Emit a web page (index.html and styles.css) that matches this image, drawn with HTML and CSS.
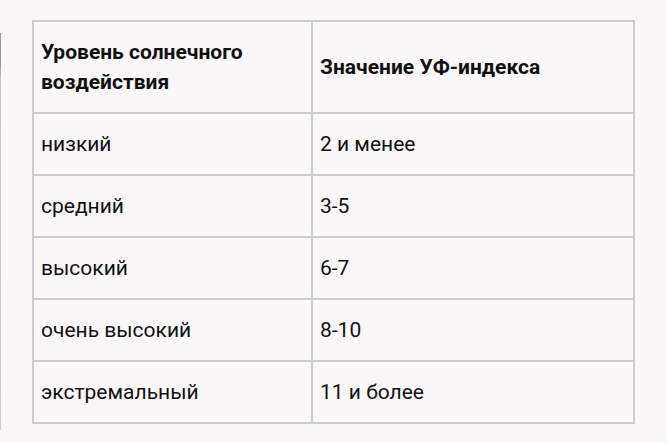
FILE: index.html
```html
<!DOCTYPE html>
<html lang="ru">
<head>
<meta charset="utf-8">
<link rel="stylesheet" href="styles.css">
</head>
<body>
<div class="page">
  <div class="edge"></div>
  <div class="content">
    <p class="cut">Индекс ультрафиолетового излучения делится на уровни согласно следующей шкале примерно так</p>
    <table class="uv">
      <thead>
        <tr><th>Уровень солнечного<br>воздействия</th><th>Значение УФ-индекса</th></tr>
      </thead>
      <tbody>
        <tr><td>низкий</td><td>2 и менее</td></tr>
        <tr><td>средний</td><td>3-5</td></tr>
        <tr><td>высокий</td><td>6-7</td></tr>
        <tr><td>очень высокий</td><td>8-10</td></tr>
        <tr><td>экстремальный</td><td>11 и более</td></tr>
      </tbody>
    </table>
  </div>
</div>
</body>
</html>
```
FILE: styles.css
```css
html, body {
  margin: 0;
  padding: 0;
  background: #f9f7f8;
  height: 100%;
  overflow: hidden;
}
body {
  font-family: Roboto, "Liberation Sans", sans-serif;
  color: #111;
}
.page {
  display: flex;
  height: 443px;
}
.edge {
  width: 1px;
  margin-top: 33px;
  height: 397px;
  background: linear-gradient(#9a9a9a 0, #9a9a9a 8%, #c4c4c4 12%, #cfcfcf 100%);
  flex: none;
}
.content {
  flex: 1;
  padding-left: 31px;
  min-width: 0;
}
.cut {
  margin: -24px 0 0 0;
  height: 44px;
  line-height: 26px;
  font-size: 20px;
  white-space: nowrap;
  overflow: hidden;
  color: #111;
}
.uv {
  border-collapse: collapse;
  width: 603px;
  font-size: 21px;
  line-height: 30px;
}
.uv th, .uv td {
  border: 2px solid #cccccc;
  text-align: left;
  vertical-align: middle;
  padding: 15px 7px 15px 7px;
}
.uv th {
  font-weight: 700;
  height: 57px;
}
.uv th:first-child, .uv td:first-child {
  width: 263px;
}
.uv td {
  height: 28.6px;
}
```
